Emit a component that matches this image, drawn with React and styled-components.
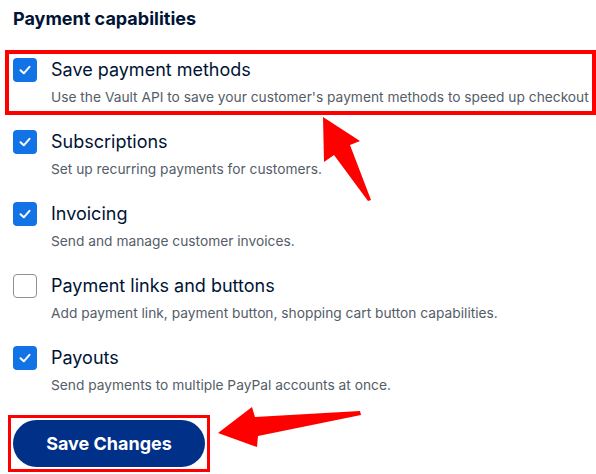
import React from 'react';
import styled, { createGlobalStyle } from 'styled-components';

const GlobalStyle = createGlobalStyle`
  body {
    margin: 0;
    background: #fff;
    font-family: Inter, "Noto Sans", sans-serif;
    -webkit-font-smoothing: antialiased;
  }
`;

const Page = styled.div`
  position: relative;
  width: 596px;
  height: 474px;
  overflow: hidden;
  padding: 7px 0 0 13px;
  box-sizing: border-box;
`;

const Title = styled.h2`
  margin: 0 0 27px 0;
  font-size: 18px;
  line-height: 24px;
  font-weight: 700;
  color: #001435;
`;

const List = styled.div`
  display: flex;
  flex-direction: column;
  gap: 23px;
`;

const Row = styled.label`
  display: grid;
  grid-template-columns: 24px 1fr;
  column-gap: 14px;
  width: 575px;
  outline: ${({ $marked }) => ($marked ? '4px solid #f00' : 'none')};
  outline-offset: 4px;
`;

const Box = styled.span`
  width: 24px;
  height: 24px;
  box-sizing: border-box;
  border-radius: 4px;
  display: flex;
  align-items: center;
  justify-content: center;
  background: ${({ $checked }) => ($checked ? '#1273e6' : '#fff')};
  border: ${({ $checked }) => ($checked ? 'none' : '1.5px solid #8c9199')};
`;

const Text = styled.div`
  display: flex;
  flex-direction: column;
  gap: 5px;
`;

const Label = styled.span`
  font-size: 18px;
  line-height: 24px;
  color: #001435;
`;

const Desc = styled.span`
  font-size: 13.75px;
  line-height: 20px;
  color: #545d68;
  white-space: nowrap;
`;

const ButtonFrame = styled.div`
  display: inline-flex;
  margin: 20px 0 0 -5px;
  padding: 2px;
  border: 3px solid #f00;
`;

const SaveButton = styled.button`
  width: 192px;
  height: 47px;
  border: none;
  border-radius: 24px;
  background: #003087;
  color: #fff;
  font-family: inherit;
  font-size: 18px;
  font-weight: 700;
`;

const Overlay = styled.svg`
  position: absolute;
  left: 0;
  top: 0;
  pointer-events: none;
`;

const items = [
  {
    label: 'Save payment methods',
    desc: "Use the Vault API to save your customer's payment methods to speed up checkout",
    checked: true,
    marked: true,
  },
  { label: 'Subscriptions', desc: 'Set up recurring payments for customers.', checked: true },
  { label: 'Invoicing', desc: 'Send and manage customer invoices.', checked: true },
  {
    label: 'Payment links and buttons',
    desc: 'Add payment link, payment button, shopping cart button capabilities.',
    checked: false,
  },
  { label: 'Payouts', desc: 'Send payments to multiple PayPal accounts at once.', checked: true },
];

const Check = () => (
  <svg width="14" height="14" viewBox="0 0 14 14">
    <polyline points="2.5,7.2 5.8,10.3 11.5,3.8" fill="none" stroke="#fff" strokeWidth="2" strokeLinecap="round" strokeLinejoin="round" />
  </svg>
);

const App = () => {
  return (
    <Page>
      <GlobalStyle />
      <Title>Payment capabilities</Title>
      <List>
        {items.map((item) => (
          <Row key={item.label} $marked={item.marked}>
            <Box $checked={item.checked}>{item.checked && <Check />}</Box>
            <Text>
              <Label>{item.label}</Label>
              <Desc>{item.desc}</Desc>
            </Text>
          </Row>
        ))}
      </List>
      <ButtonFrame>
        <SaveButton>Save Changes</SaveButton>
      </ButtonFrame>

      {/* annotation arrows */}
      <Overlay width="596" height="474">
        <polygon points="323,117 360,141 350,145 371,200 368,201 334,155 324,162" fill="#f00" />
        <polygon points="218,433 252,407 255,417 360,411 361,415 258,436 257,447" fill="#f00" />
      </Overlay>
    </Page>
  );
};

export default App;
